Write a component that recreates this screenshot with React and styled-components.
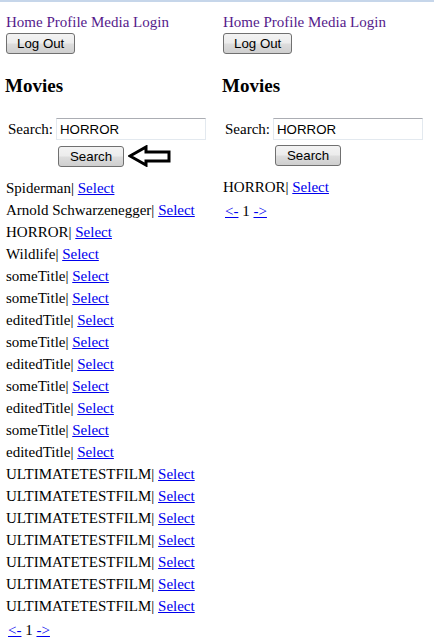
import React from "react";
import styled, { createGlobalStyle } from "styled-components";

const Global = createGlobalStyle`
  html, body {
    margin: 0;
    padding: 0;
    background: #fff;
  }
  body {
    font-family: "Liberation Serif", "Times New Roman", serif;
    font-size: 15px;
    color: #000;
    border-top: 2px solid #c6d6ea;
  }
`;

const leftMovies = [
  "Spiderman",
  "Arnold Schwarzenegger",
  "HORROR",
  "Wildlife",
  "someTitle",
  "someTitle",
  "editedTitle",
  "someTitle",
  "editedTitle",
  "someTitle",
  "editedTitle",
  "someTitle",
  "editedTitle",
  "ULTIMATETESTFILM",
  "ULTIMATETESTFILM",
  "ULTIMATETESTFILM",
  "ULTIMATETESTFILM",
  "ULTIMATETESTFILM",
  "ULTIMATETESTFILM",
  "ULTIMATETESTFILM",
];

export default function App() {
  return (
    <>
      <Global />
      <Page>
        <MoviesPanel movies={leftMovies} withArrow />
        <MoviesPanel movies={["HORROR"]} />
      </Page>
    </>
  );
}

function MoviesPanel({ movies, withArrow }) {
  return (
    <Panel>
      <Nav>
        <NavLink href="#">Home</NavLink> <NavLink href="#">Profile</NavLink>{" "}
        <NavLink href="#">Media</NavLink> <NavLink href="#">Login</NavLink>
      </Nav>
      <Button type="button">Log Out</Button>
      <Title>Movies</Title>
      <SearchForm>
        <Label>Search:</Label>
        <Input defaultValue="HORROR" />
        <span />
        <ButtonCell>
          <Button type="button" wide>Search</Button>
          {withArrow && (
            <svg width="44" height="22" viewBox="0 0 44 22">
              <polygon
                points="2,11 18,2 18,7 41,7 41,16 18,16 18,20"
                fill="#fff"
                stroke="#000"
                strokeWidth="3"
                strokeLinejoin="miter"
              />
            </svg>
          )}
        </ButtonCell>
      </SearchForm>
      <List>
        {movies.map((m, i) => (
          <Row key={i}>
            {m}| <Link href="#">Select</Link>
          </Row>
        ))}
      </List>
      <Pager>
        <Link href="#">&lt;-</Link> 1 <Link href="#">-&gt;</Link>
      </Pager>
    </Panel>
  );
}

//styling
const Page = styled.div`
  display: flex;
`;

const Panel = styled.div`
  width: 213px;
  padding: 10px 0 0 6px;
`;

const Nav = styled.div`
  line-height: 21px;
  height: 21px;
`;

const NavLink = styled.a`
  color: #551a8b;
  text-decoration: none;
`;

const Button = styled.button`
  font-family: "Liberation Sans", Arial, sans-serif;
  font-size: 13.3px;
  color: #000;
  height: 21px;
  padding: 0 ${(p) => (p.wide ? "11px" : "10px")};
  border: 1px solid #707070;
  border-radius: 3px;
  background: linear-gradient(#f3f3f3, #ececec 48%, #dddddd 52%, #cfcfcf);
  display: block;
  line-height: 19px;
`;

const Title = styled.h3`
  font-size: 19px;
  font-weight: bold;
  margin: 21px 0 0 -1px;
  line-height: 22px;
`;

const SearchForm = styled.div`
  display: grid;
  grid-template-columns: 46px auto;
  column-gap: 2px;
  row-gap: 5px;
  margin: 21px 0 0 2px;
  align-items: center;
`;

const Label = styled.span`
  line-height: 22px;
  white-space: nowrap;
`;

const Input = styled.input`
  font-family: "Liberation Sans", Arial, sans-serif;
  font-size: 13.3px;
  width: 150px;
  height: 22px;
  box-sizing: border-box;
  padding: 1px 3px 0;
  border: 1px solid #e3e9ef;
  border-top-color: #abadb3;
  outline: none;
`;

const ButtonCell = styled.div`
  display: flex;
  align-items: center;
  gap: 4px;
  padding-left: 2px;
`;

const List = styled.div`
  margin-top: 10px;
`;

const Row = styled.div`
  line-height: 22px;
  white-space: nowrap;
`;

const Link = styled.a`
  color: #0000ee;
  text-decoration: underline;
`;

const Pager = styled.div`
  line-height: 22px;
  margin-top: 2px;
  padding-left: 2px;
`;
